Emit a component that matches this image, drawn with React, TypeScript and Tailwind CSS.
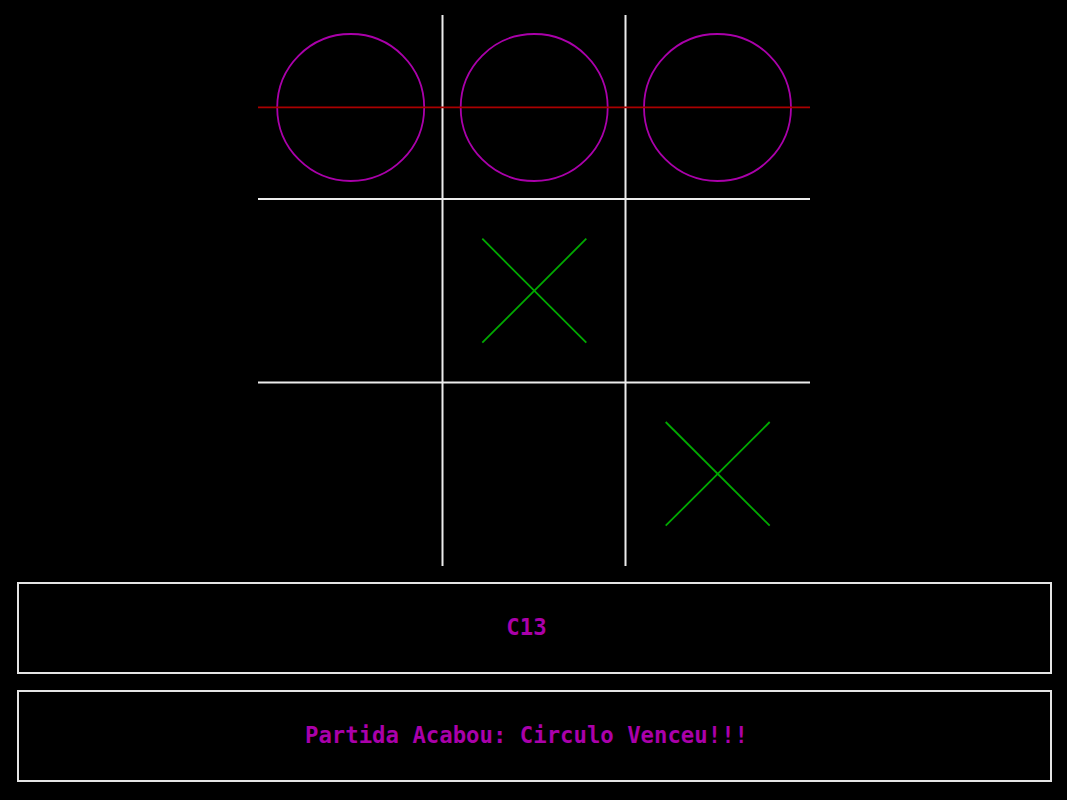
const magenta = '#aa00aa'

function Board() {
  return (
    <svg width="552" height="551" viewBox="0 0 552 551" className="block">
      {/* grid */}
      <line x1="184.5" y1="0" x2="184.5" y2="551" stroke="#ececec" strokeWidth="2" />
      <line x1="367.5" y1="0" x2="367.5" y2="551" stroke="#ececec" strokeWidth="2" />
      <line x1="0" y1="184" x2="552" y2="184" stroke="#ececec" strokeWidth="2" />
      <line x1="0" y1="367.5" x2="552" y2="367.5" stroke="#ececec" strokeWidth="2" />

      {/* circles */}
      <circle cx="92.7" cy="92.5" r="73.5" fill="none" stroke={magenta} strokeWidth="1.8" />
      <circle cx="276.2" cy="92.5" r="73.5" fill="none" stroke={magenta} strokeWidth="1.8" />
      <circle cx="459.5" cy="92.5" r="73.5" fill="none" stroke={magenta} strokeWidth="1.8" />

      {/* crosses */}
      <line x1="224.3" y1="223.7" x2="328.3" y2="327.7" stroke="#00aa00" strokeWidth="1.8" />
      <line x1="328.3" y1="223.7" x2="224.3" y2="327.7" stroke="#00aa00" strokeWidth="1.8" />
      <line x1="407.7" y1="407" x2="511.7" y2="510.7" stroke="#00aa00" strokeWidth="1.8" />
      <line x1="511.7" y1="407" x2="407.7" y2="510.7" stroke="#00aa00" strokeWidth="1.8" />

      {/* winning row */}
      <line x1="0" y1="92.3" x2="552" y2="92.3" stroke="#aa0000" strokeWidth="1.8" />
    </svg>
  )
}

function MessageBox({ text }: { text: string }) {
  return (
    <div className="ml-[17px] flex h-[92px] w-[1035px] items-center justify-center border-2 border-[#e4e4e4] pr-[16px]">
      <span
        className="text-[22.3px] font-bold text-[#aa00aa]"
        style={{ fontFamily: '"DejaVu Sans Mono", "Liberation Mono", monospace' }}
      >
        {text}
      </span>
    </div>
  )
}

export default function App() {
  return (
    <div className="h-[800px] w-[1067px] overflow-hidden bg-black">
      <div className="ml-[258px] pt-[15px]">
        <Board />
      </div>
      <div className="mt-[16px] flex flex-col gap-[16px]">
        <MessageBox text="C13" />
        <MessageBox text="Partida Acabou: Circulo Venceu!!!" />
      </div>
    </div>
  )
}
